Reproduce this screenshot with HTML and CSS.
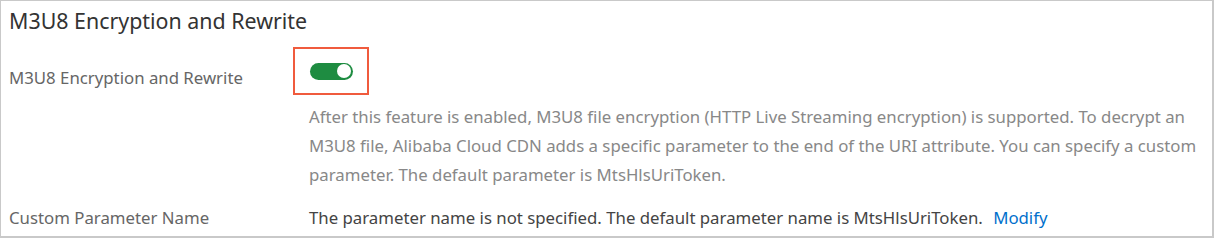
FILE: index.html
```html
<!DOCTYPE html>
<html>
<head>
    <title>M3U8 Encryption and Rewrite</title>
    <link rel="stylesheet" href="styles.css">
</head>
<body>
    <div class="panel">
        <h2 class="panel-title">M3U8 Encryption and Rewrite</h2>

        <div class="row row-switch">
            <div class="label">M3U8 Encryption and Rewrite</div>
            <div class="value">
                <span class="mark">
                    <span class="switch on"><span class="knob"></span></span>
                </span>
            </div>
        </div>

        <div class="row">
            <div class="label"></div>
            <p class="help">After this feature is enabled, M3U8 file encryption (HTTP Live Streaming encryption) is supported. To decrypt an M3U8 file, Alibaba Cloud CDN adds a specific parameter to the end of the URI attribute. You can specify a custom parameter. The default parameter is MtsHlsUriToken.</p>
        </div>

        <div class="row row-param">
            <div class="label">Custom Parameter Name</div>
            <div class="value">
                The parameter name is not specified. The default parameter name is MtsHlsUriToken.
                <a href="#" class="link">Modify</a>
            </div>
        </div>
    </div>
</body>
</html>
```

FILE: styles.css
```css
* {
    margin: 0;
    padding: 0;
    box-sizing: border-box;
}

body {
    background: #fff;
    font-family: "Noto Sans", "Open Sans", sans-serif;
}

.panel {
    width: 1214px;
    height: 238px;
    border: 1px solid #c9c9c9;
    border-right-width: 2px;
    border-bottom-width: 2px;
    padding-left: 8px;
    overflow: hidden;
}

.panel-title {
    font-size: 21.4px;
    font-weight: 400;
    color: #333;
    height: 40px;
    line-height: 40px;
}

.row {
    display: flex;
}

.label {
    width: 300px;
    flex-shrink: 0;
    font-size: 16.8px;
    color: #666;
}

.row-switch {
    align-items: center;
    padding-top: 6px;
}

.row-switch .label {
    padding-top: 12px;
}

.mark {
    display: inline-flex;
    align-items: center;
    justify-content: center;
    width: 76px;
    height: 48px;
    border: 2px solid #f05b3d;
    margin-left: -16px;
}

.switch {
    display: flex;
    align-items: center;
    justify-content: flex-end;
    width: 43px;
    height: 17px;
    border-radius: 9px;
    background: #1e8c41;
    padding: 1.5px;
}

.knob {
    width: 14px;
    height: 14px;
    border-radius: 50%;
    background: #fff;
}

.help {
    font-size: 16.8px;
    line-height: 29px;
    color: #888;
    width: 902px;
    margin-top: 7px;
}

.row-param {
    margin-top: 14px;
    font-size: 16.8px;
    line-height: 29px;
}

.row-param .value {
    color: #444;
}

.link {
    color: #0070cc;
    text-decoration: none;
    margin-left: 6px;
}
```
